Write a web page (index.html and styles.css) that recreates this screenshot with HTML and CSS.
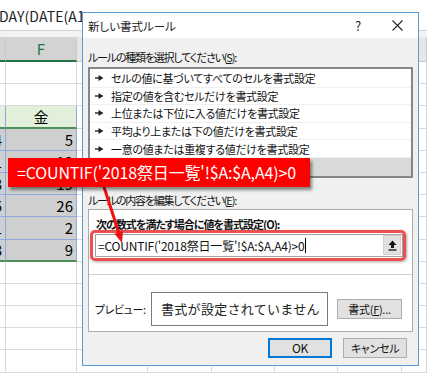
FILE: index.html
```html
<!DOCTYPE html>
<html lang="ja">
<head>
<meta charset="utf-8">
<link rel="stylesheet" href="styles.css">
</head>
<body>
<div class="sheet">
  <div class="fbar"><span class="ftext">DAY(DATE(A1</span></div>
  <div class="gap"></div>
  <div class="row hdr">
    <div class="c e sel"></div><div class="c f sel">F</div><div class="c g">G</div><div class="c h">H</div><div class="c i">I</div><div class="c j">J</div><div class="c k">K</div><div class="c l">L</div>
  </div>
  <div class="row"><div class="c e"></div><div class="c f"></div><div class="c g"></div><div class="c h"></div><div class="c i"></div><div class="c j"></div><div class="c k"></div><div class="c l"></div></div>
  <div class="row"><div class="c e"></div><div class="c f"></div><div class="c g"></div><div class="c h"></div><div class="c i"></div><div class="c j"></div><div class="c k"></div><div class="c l"></div></div>
  <div class="row thead"><div class="c e tb"></div><div class="c f tb ctr">金</div><div class="c g"></div><div class="c h"></div><div class="c i"></div><div class="c j"></div><div class="c k"></div><div class="c l"></div></div>
  <div class="row"><div class="c e td num">4</div><div class="c f td num">5</div><div class="c g"></div><div class="c h"></div><div class="c i"></div><div class="c j"></div><div class="c k"></div><div class="c l"></div></div>
  <div class="row"><div class="c e td num">11</div><div class="c f td num">12</div><div class="c g"></div><div class="c h"></div><div class="c i"></div><div class="c j"></div><div class="c k"></div><div class="c l"></div></div>
  <div class="row"><div class="c e td num">18</div><div class="c f td num">19</div><div class="c g"></div><div class="c h"></div><div class="c i"></div><div class="c j"></div><div class="c k"></div><div class="c l"></div></div>
  <div class="row"><div class="c e td num">25</div><div class="c f td num">26</div><div class="c g"></div><div class="c h"></div><div class="c i"></div><div class="c j"></div><div class="c k"></div><div class="c l"></div></div>
  <div class="row"><div class="c e td num">1</div><div class="c f td num">2</div><div class="c g"></div><div class="c h"></div><div class="c i"></div><div class="c j"></div><div class="c k"></div><div class="c l"></div></div>
  <div class="row tend"><div class="c e td num">8</div><div class="c f td num">9</div><div class="c g"></div><div class="c h"></div><div class="c i"></div><div class="c j"></div><div class="c k"></div><div class="c l"></div></div>
  <div class="row"><div class="c e"></div><div class="c f"></div><div class="c g"></div><div class="c h"></div><div class="c i"></div><div class="c j"></div><div class="c k"></div><div class="c l"></div></div>
  <div class="row"><div class="c e"></div><div class="c f"></div><div class="c g"></div><div class="c h"></div><div class="c i"></div><div class="c j"></div><div class="c k"></div><div class="c l"></div></div>
  <div class="row"><div class="c e"></div><div class="c f"></div><div class="c g"></div><div class="c h"></div><div class="c i"></div><div class="c j"></div><div class="c k"></div><div class="c l"></div></div>
  <div class="row"><div class="c e"></div><div class="c f"></div><div class="c g"></div><div class="c h"></div><div class="c i"></div><div class="c j"></div><div class="c k"></div><div class="c l"></div></div>
  <div class="row"><div class="c e"></div><div class="c f"></div><div class="c g"></div><div class="c h"></div><div class="c i"></div><div class="c j"></div><div class="c k"></div><div class="c l"></div></div>
</div>

<div class="dialog">
  <div class="titlebar">
    <span class="title">新しい書式ルール</span>
    <span class="help">?</span>
    <span class="close"><svg width="11" height="11" viewBox="0 0 11 11"><path d="M0.5 0.5L10.5 10.5M10.5 0.5L0.5 10.5" stroke="#222" stroke-width="1.1" fill="none"/></svg></span>
  </div>
  <div class="body">
    <div class="label">ルールの種類を選択してください(<u>S</u>):</div>
    <ul class="list">
      <li><svg class="mk" width="9" height="6" viewBox="0 0 9 6"><path d="M0 3H4" stroke="#222" stroke-width="1.4"/><path d="M3.5 0L8.5 3L3.5 6Z" fill="#222"/></svg>セルの値に基づいてすべてのセルを書式設定</li>
      <li><svg class="mk" width="9" height="6" viewBox="0 0 9 6"><path d="M0 3H4" stroke="#222" stroke-width="1.4"/><path d="M3.5 0L8.5 3L3.5 6Z" fill="#222"/></svg>指定の値を含むセルだけを書式設定</li>
      <li><svg class="mk" width="9" height="6" viewBox="0 0 9 6"><path d="M0 3H4" stroke="#222" stroke-width="1.4"/><path d="M3.5 0L8.5 3L3.5 6Z" fill="#222"/></svg>上位または下位に入る値だけを書式設定</li>
      <li><svg class="mk" width="9" height="6" viewBox="0 0 9 6"><path d="M0 3H4" stroke="#222" stroke-width="1.4"/><path d="M3.5 0L8.5 3L3.5 6Z" fill="#222"/></svg>平均より上または下の値だけを書式設定</li>
      <li><svg class="mk" width="9" height="6" viewBox="0 0 9 6"><path d="M0 3H4" stroke="#222" stroke-width="1.4"/><path d="M3.5 0L8.5 3L3.5 6Z" fill="#222"/></svg>一意の値または重複する値だけを書式設定</li>
      <li class="selrow"><svg class="mk" width="9" height="6" viewBox="0 0 9 6"><path d="M0 3H4" stroke="#222" stroke-width="1.4"/><path d="M3.5 0L8.5 3L3.5 6Z" fill="#222"/></svg>数式を使用して、書式設定するセルを決定</li>
    </ul>
    <div class="label label2">ルールの内容を編集してください(<u>E</u>):</div>
    <div class="edit">
      <div class="bold">次の数式を満たす場合に値を書式設定(<u>O</u>):</div>
      <div class="hl">
        <div class="input">
          <span class="itext">=COUNTIF('2018祭日一覧'!$A:$A,A4)&gt;0</span><span class="caret"></span>
          <span class="rbtn"><svg width="9" height="11" viewBox="0 0 9 11"><path d="M4.5 0.5L8.5 5H6V8H3V5H0.5Z" fill="#111"/><path d="M0.5 10H8.5" stroke="#111" stroke-width="1.3"/></svg></span>
        </div>
      </div>
      <div class="sep"></div>
      <div class="preview">
        <span class="plabel">プレビュー:</span>
        <div class="pbox">書式が設定されていません</div>
        <button class="btn fmt">書式(<u>F</u>)...</button>
      </div>
    </div>
    <div class="buttons">
      <button class="btn ok">OK</button>
      <button class="btn cancel">キャンセル</button>
    </div>
  </div>
</div>

<svg class="arrow" width="40" height="75" viewBox="0 0 40 75">
  <path d="M5.5 0L23.7 56.5" stroke="#ee1111" stroke-width="3" fill="none"/>
  <path d="M27 67L28 55L19.4 57.7Z" fill="#ee1111"/>
</svg>

<div class="callout">=COUNTIF('2018祭日一覧'!$A:$A,A4)&gt;0</div>
</body>
</html>
```

FILE: styles.css
```css
* { box-sizing: border-box; margin: 0; padding: 0; }
body {
  margin: 0;
  width: 427px;
  height: 375px;
  overflow: hidden;
  position: relative;
  background: #fff;
  color: #000;
  font-family: "Noto Sans CJK JP", "Noto Sans", sans-serif;
}

/* spreadsheet */
.sheet { width: 427px; height: 375px; overflow: hidden; }
.fbar {
  height: 31px;
  border-bottom: 1px solid #d4d4d4;
  display: flex;
  align-items: center;
  overflow: hidden;
  padding-top: 2px;
}
.ftext { font-size: 14px; margin-left: -1px; color: #222; white-space: nowrap; letter-spacing: 0.1px; }
.gap { height: 6px; background: #f3f3f3; }
.row { display: flex; height: 22.2px; }
.row.hdr { height: 25px; background: #e6e6e6; }
.c {
  flex: none;
  border-right: 1px solid #dadada;
  border-bottom: 1px solid #dadada;
  overflow: hidden;
  display: flex;
  align-items: center;
  font-size: 15px;
  white-space: nowrap;
}
.e { width: 6px; }
.f { width: 71px; }
.g { width: 71px; }
.h { width: 64px; }
.i { width: 63px; }
.j { width: 63px; }
.k { width: 64px; }
.l { flex: 1; }
.hdr .c { justify-content: center; color: #444; border-right-color: #c8c8c8; border-bottom: 1px solid #c8c8c8; }
.hdr .c.sel { background: #d3d3d3; color: #217346; border-bottom: 2px solid #217346; }
.ctr { justify-content: center; }
.tb { background: #e2efda; border-right-color: #8ea9db; border-bottom: 2px solid #4f8f5a; }
.td { background: #cfcfcf; border-right-color: #8ea9db; border-bottom-color: #8ea9db; }
.num { justify-content: flex-end; padding-right: 3px; }
.tend .td { border-bottom: 2px solid #4f8f5a; }

/* dialog */
.dialog {
  position: absolute;
  left: 82px;
  top: 12px;
  width: 337px;
  height: 354px;
  border: 1px solid #5b9bd5;
  background: #f0f0f0;
  display: flex;
  flex-direction: column;
  font-size: 11px;
  font-feature-settings: "palt";
  color: #111;
}
.titlebar {
  height: 25px;
  background: #fff;
  display: flex;
  align-items: center;
  padding-left: 5px;
  flex: none;
}
.title { flex: 1; font-size: 11.5px; color: #222; }
.help { width: 14px; font-size: 13px; text-align: center; margin-right: 27px; color: #222; font-feature-settings: normal; }
.close { width: 11px; height: 11px; margin-right: 15px; display: flex; }
.body { flex: 1; padding: 11px 5px 0 5px; display: flex; flex-direction: column; }
.label { line-height: 16px; height: 16px; letter-spacing: -1.2px; white-space: nowrap; }
u { text-decoration: underline; text-underline-offset: 1px; }
.list {
  list-style: none;
  margin-top: 2px;
  background: #fff;
  border: 2px solid #868686;
  padding-top: 1px;
}
.list li {
  height: 17.6px;
  display: flex;
  align-items: center;
  padding-left: 5px;
  border-bottom: 1px solid #f0f0f0;
  letter-spacing: -0.3px;
  white-space: nowrap;
}
.list li.selrow { background: #d9d9d9; border-bottom: none; }
.mk { margin-right: 7px; flex: none; }
.label2 { margin-top: 14px; }
.edit {
  margin-top: 1px;
  height: 123px;
  background: #fff;
  border: 1px solid #acacac;
  padding: 7px 0 0 0;
  display: flex;
  flex-direction: column;
}
.bold { font-weight: bold; line-height: 14px; padding-left: 7px; letter-spacing: -1px; white-space: nowrap; }
.hl {
  margin: -1px 6px 0 1px;
  height: 31px;
  border: 3px solid #eb5050;
  border-radius: 5px;
  box-shadow: 1px 1px 3px rgba(0,0,0,0.35);
  padding: 1px 0 0 2px;
}
.input {
  height: 23px;
  border: 1px solid #a0a0a0;
  background: #fff;
  display: flex;
  align-items: center;
  padding-left: 2px;
}
.itext { font-size: 12px; font-feature-settings: normal; letter-spacing: -0.2px; white-space: nowrap; }
.caret { width: 1px; height: 15px; background: #000; margin-left: 1px; }
.rbtn {
  margin-left: auto;
  margin-right: 1px;
  width: 18px;
  height: 20px;
  background: #e1e1e1;
  border: 1px solid #d0d0d0;
  display: flex;
  align-items: center;
  justify-content: center;
}
.sep { margin-top: 13px; height: 1px; background: #d0d0d0; }
.preview { margin-top: 17px; display: flex; align-items: center; padding-left: 6px; }
.plabel { width: 56px; white-space: nowrap; letter-spacing: -0.4px; }
.pbox {
  width: 177px;
  height: 34px;
  border: 1px solid #7a7a7a;
  display: flex;
  align-items: center;
  padding-left: 9px;
  font-size: 13px;
  font-feature-settings: normal;
  letter-spacing: 0.3px;
  color: #222;
  white-space: nowrap;
}
.btn {
  font-family: inherit;
  font-size: 11px;
  font-feature-settings: "palt";
  letter-spacing: -0.3px;
  background: #e1e1e1;
  border: 1px solid #adadad;
  color: #111;
  height: 20px;
  display: flex;
  align-items: center;
  justify-content: center;
  white-space: nowrap;
}
.fmt { width: 65px; margin-left: 9px; }
.buttons { margin-top: 6px; display: flex; justify-content: flex-end; gap: 11px; padding-right: 6px; }
.ok { width: 64px; border: 1px solid #0078d7; box-shadow: inset 0 0 0 1px #0078d7; font-size: 12px; }
.cancel { width: 64px; }

/* overlays */
.arrow { position: absolute; left: 95px; top: 176px; }
.callout {
  position: absolute;
  left: 8px;
  top: 158px;
  width: 302px;
  height: 29px;
  background: #ff0000;
  color: #fff;
  font-size: 16px;
  letter-spacing: -0.15px;
  line-height: 29px;
  padding-left: 9px;
  white-space: nowrap;
  box-shadow: 2px 3px 3px rgba(0,0,0,0.45);
}
```
